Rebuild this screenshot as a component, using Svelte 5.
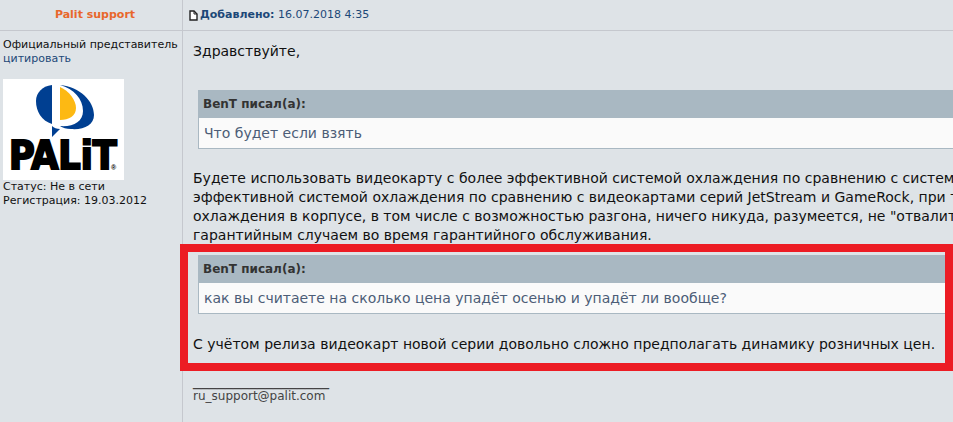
<script>
    const post = {
        author: 'Palit support',
        rank: 'Официальный представитель',
        date: '16.07.2018 4:35',
        status: 'Не в сети',
        registered: '19.03.2012',
        email: 'ru_support@palit.com'
    };

    const answer = [
        'Будете использовать видеокарту с более эффективной системой охлаждения по сравнению с системой',
        'эффективной системой охлаждения по сравнению с видеокартами серий JetStream и GameRock, при ти',
        'охлаждения в корпусе, в том числе с возможностью разгона, ничего никуда, разумеется, не "отвалится',
        'гарантийным случаем во время гарантийного обслуживания.'
    ];
</script>

{#snippet quote(author, text)}
    <blockquote>
        <cite>{author} писал(а):</cite>
        <p>{text}</p>
    </blockquote>
{/snippet}

<article>
    <header class="author">{post.author}</header>
    <header class="added">
        <svg class="page" viewBox="0 0 9 11" aria-hidden="true">
            <path d="M1 1H5L8 4V10H1Z" fill="#fff" stroke="#222" stroke-width="1.4"/>
            <path d="M5 1V4H8" fill="none" stroke="#222"/>
        </svg>
        <a href="#post"><b>Добавлено:</b> {post.date}</a>
    </header>

    <aside>
        <div>{post.rank}</div>
        <a href="#quote">цитировать</a>
        <svg class="avatar" viewBox="0 0 121 101" role="img" aria-label="Palit">
            <rect width="121" height="101" fill="#fff"/>
            <path d="M49 6C39 7 33 14 33 22C33 33 39 42 49 45Z" fill="#003f91"/>
            <path d="M57 6C77 8 91 22 91 36C91 46 81 51 68 50C63 50 60 49 57 47C70 48 80 43 80 32C80 20 71 10 57 6Z" fill="#003f91"/>
            <path d="M57 8C66 12 73 21 73 29C73 37 66 41 57 41Z" fill="#fdb913"/>
            <path d="M49 47Q52 50 57 50L49 58Z" fill="#003f91"/>
            <text class="brand" x="6" y="90">PALiT</text>
            <text class="mark" x="108" y="91">®</text>
        </svg>
        <div>Статус: {post.status}</div>
        <div>Регистрация: {post.registered}</div>
    </aside>

    <section>
        <p class="hello">Здравствуйте,</p>
        {@render quote('BenT', 'Что будет если взять')}
        <p class="answer">
            {#each answer as line}
                {line}<br>
            {/each}
        </p>
        <div class="marked">
            {@render quote('BenT', 'как вы считаете на сколько цена упадёт осенью и упадёт ли вообще?')}
            <p class="reply">С учётом релиза видеокарт новой серии довольно сложно предполагать динамику розничных цен.</p>
        </div>
        <footer>
            <div class="rule">_________________</div>
            <div>{post.email}</div>
        </footer>
    </section>
</article>

<style>
    :global(body){
        background: #dee3e7;
    }

    article{
        display: grid;
        grid-template-columns: 182px minmax(0, 1fr);
        grid-template-rows: 31px auto;
        overflow: hidden;
        border-bottom: 1px solid #c5c8ce;
        font-family: Verdana, "DejaVu Sans", sans-serif;
        font-size: 11px;
        line-height: 14px;
        color: #111;
        white-space: nowrap;
    }

    header{
        display: flex;
        align-items: center;
        border-bottom: 1px solid #c5c8ce;
    }

    .author{
        justify-content: center;
        padding-left: 8px;
        color: #e8672c;
        font-weight: bold;
    }

    .added{
        gap: 2px;
        padding-left: 6px;
        border-left: 1px solid #c5c8ce;
    }

    .page{
        width: 9px;
        height: 11px;
    }

    a{
        color: #1c4878;
        text-decoration: none;
    }

    aside{
        padding: 7px 3px;
    }

    .avatar{
        display: block;
        width: 121px;
        height: 101px;
        margin-top: 13px;
    }

    .brand{
        font: bold 39px "DejaVu Sans Condensed", "DejaVu Sans", sans-serif;
        stroke: #000;
        stroke-width: 2px;
    }

    .mark{
        font: bold 7px "Liberation Sans", sans-serif;
    }

    section{
        padding: 11px 0 21px 10px;
        border-left: 1px solid #c5c8ce;
        font-size: 14px;
        line-height: 19px;
    }

    p{
        margin: 0;
    }

    blockquote{
        margin: 0 0 0 5px;
        border-left: 1px solid #a9b8c2;
        border-bottom: 1px solid #a9b8c2;
        background: #fafafa;
        color: #4c5d77;
    }

    cite{
        display: block;
        padding: 5px 4px;
        background: #a9b8c2;
        color: #333;
        font-size: 12px;
        font-style: normal;
        font-weight: bold;
        line-height: 18px;
    }

    blockquote p{
        padding: 6px 5px 5px;
    }

    .hello{
        margin-bottom: 29px;
    }

    .answer{
        margin: 20px 0 10px;
    }

    .marked{
        position: relative;
    }

    /* red frame around the quoted question */
    .marked::after{
        content: "";
        position: absolute;
        inset: -11px 0 -17px -13px;
        border: 8px solid #ec1c24;
    }

    .reply{
        margin-top: 21px;
    }

    footer{
        margin-top: 18px;
        color: #444;
        font-size: 12px;
        line-height: 16px;
    }

    .rule{
        font-size: 16px;
    }
</style>
